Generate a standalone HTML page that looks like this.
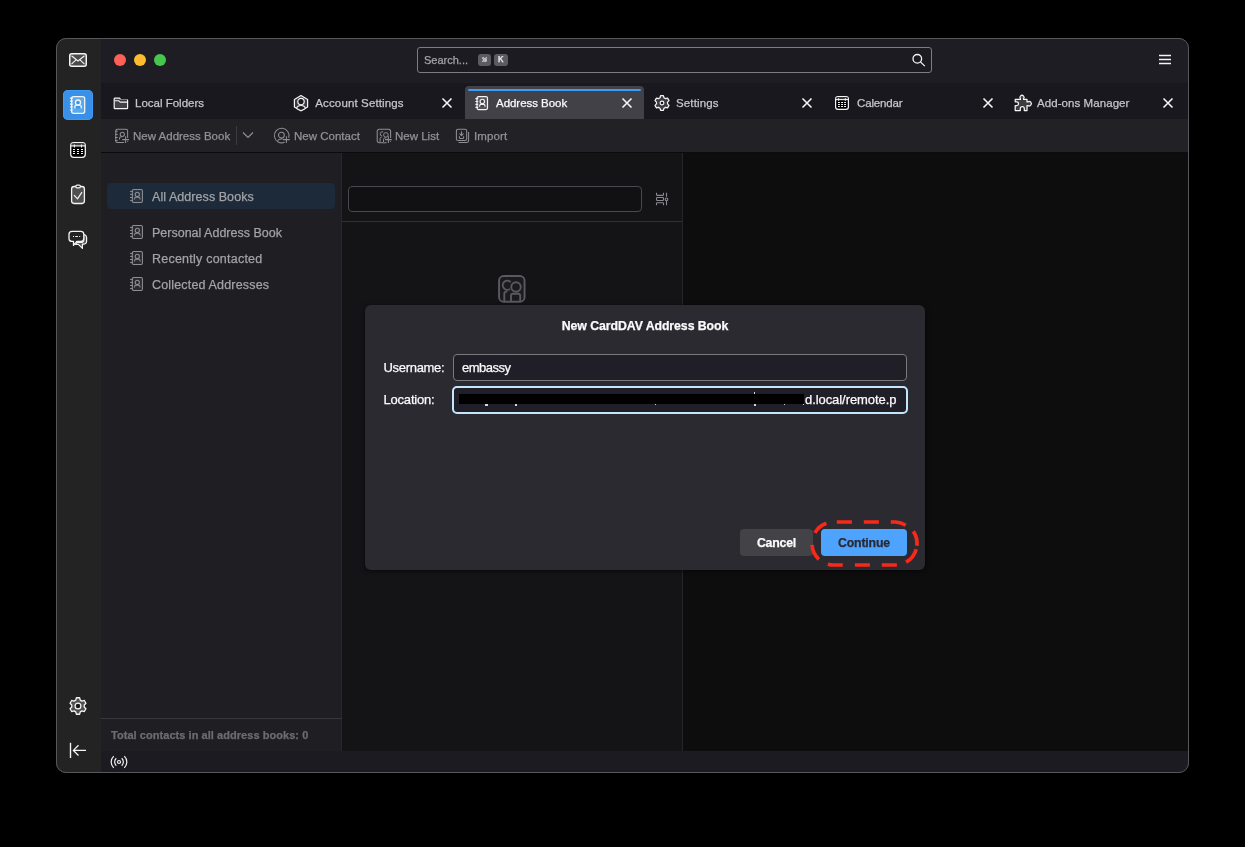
<!DOCTYPE html>
<html><head><meta charset="utf-8"><style>
html,body{margin:0;padding:0;background:#000;width:1245px;height:847px;overflow:hidden}
.a{position:absolute}
.t{position:absolute;white-space:nowrap;line-height:30px;font-family:"Liberation Sans", sans-serif;-webkit-text-stroke:0.25px currentColor}
#win{position:absolute;left:56px;top:38px;width:1133px;height:735px;border-radius:10px;overflow:hidden;background:#1c1b22}
#win > *{}
#frame{position:absolute;left:56px;top:38px;width:1131px;height:733px;border-radius:10px;border:1px solid #57565b;pointer-events:none}
</style></head><body>
<div id="win"><div class="a" style="left:-56px;top:-38px;width:1245px;height:847px;will-change:transform">
<div class="a" style="left:56px;top:38px;width:45px;height:735px;background:#232323;border-radius:0;"></div><div class="a" style="left:101px;top:38px;width:1088px;height:45px;background:#1e1d23;border-radius:0;"></div><div class="a" style="left:101px;top:83px;width:1088px;height:36px;background:#19181e;border-radius:0;"></div><div class="a" style="left:101px;top:119px;width:1088px;height:33px;background:#222126;border-radius:0;"></div><div class="a" style="left:101px;top:152px;width:1088px;height:1px;background:#0b0b0c;border-radius:0;"></div><div class="a" style="left:101px;top:153px;width:241px;height:598px;background:#1f1f23;border-radius:0;"></div><div class="a" style="left:342px;top:153px;width:340px;height:598px;background:#141417;border-radius:0;"></div><div class="a" style="left:341px;top:153px;width:1px;height:598px;background:#28282b;border-radius:0;"></div><div class="a" style="left:682px;top:153px;width:1px;height:598px;background:#262629;border-radius:0;"></div><div class="a" style="left:683px;top:153px;width:506px;height:598px;background:#0d0d0e;border-radius:0;"></div><div class="a" style="left:101px;top:751px;width:1088px;height:22px;background:#1c1b21;border-radius:0;"></div><svg class="a" style="left:68px;top:52px" width="20" height="16" viewBox="0 0 20 16" fill="none"><rect x="1.75" y="1.75" width="16.5" height="12.5" rx="2" fill="#4a4a4a" stroke="#f4f4f5" stroke-width="1.5"/><path d="M3.5 3.8 L10 9 L16.5 3.8 M3.5 12.2 L8.2 7.6 M16.5 12.2 L11.8 7.6" stroke="#f4f4f5" stroke-width="1.1"/></svg><div class="a" style="left:63px;top:90px;width:30px;height:30px;background:#3990e6;border-radius:5px;box-shadow:inset 0 0 0 1px #3d9bf5"></div><svg class="a" style="left:60px;top:86px" width="36" height="38" viewBox="0 0 36 38" fill="none"><rect x="11.6" y="10.7" width="13.1" height="16.6" rx="2" fill="#5aa8ee" stroke="#f4f4f5" stroke-width="1.3"/><path d="M9.9 12.2h2.9M9.9 15.1h2.9M9.9 18.1h2.9M9.9 21h2.9M9.9 24h2.9" stroke="#f4f4f5" stroke-width="1.2"/><path d="M14.9 22.6v-1.6c0-1.1.8-1.9 1.9-1.9h2.5c1.1 0 1.9.8 1.9 1.9v1.6" fill="#3d95e8" stroke="#f4f4f5" stroke-width="1.3"/><circle cx="18" cy="16.5" r="2.5" fill="#3d95e8" stroke="#f4f4f5" stroke-width="1.3"/></svg><svg class="a" style="left:64px;top:136px" width="28" height="28" viewBox="0 0 28 28" fill="none"><rect x="6.7" y="6.7" width="14.6" height="14.6" rx="3" fill="#000" stroke="#f4f4f5" stroke-width="1.3"/><rect x="7.5" y="7.4" width="13" height="2.2" fill="#444"/><path d="M7 9.9h14" stroke="#f4f4f5" stroke-width="1.2"/><path d="M10.4 8.4v3M17.5 8.4v3" stroke="#f4f4f5" stroke-width="1.1"/><path d="M9 13.5h2M13 13.5h2M17 13.5h2M9 15.5h2M13 15.5h2M17 15.5h2M9 17.5h2M13 17.5h2M17 17.5h2" stroke="#f4f4f5" stroke-width="1.2"/></svg><svg class="a" style="left:64px;top:180px" width="28" height="28" viewBox="0 0 28 28" fill="none"><rect x="7.6" y="6.5" width="12.8" height="17" rx="2.4" fill="#505050" stroke="#f4f4f5" stroke-width="1.3"/><rect x="11.8" y="5.2" width="4.6" height="2.6" rx="1.3" fill="#232323" stroke="#f4f4f5" stroke-width="1.2"/><path d="M10 15.2l3.5 3.6 4.5-6.7" stroke="#f4f4f5" stroke-width="1.2"/></svg><svg class="a" style="left:64px;top:226px" width="28" height="28" viewBox="0 0 28 28" fill="none"><path d="M19.4 8.6A3 3 0 0 1 22.6 11.6V15.2A3 3 0 0 1 19.6 18.2H18.4L18.4 22.4 14.4 18.4H11.6L12.6 16.4H16.8A3 3 0 0 0 19.8 13.4Z" fill="#555" stroke="#f4f4f5" stroke-width="1.2" stroke-linejoin="round"/><path d="M8 5.3H16.8A3 3 0 0 1 19.8 8.3V12.4A3 3 0 0 1 16.8 15.4H12.8L9.5 19.4V15.4H8A3 3 0 0 1 5 12.4V8.3A3 3 0 0 1 8 5.3Z" fill="#232323" stroke="#f4f4f5" stroke-width="1.3" stroke-linejoin="round"/><path d="M9 10.5h1M11.3 10.5h2.6M15.2 10.5h1" stroke="#f4f4f5" stroke-width="1.2"/></svg><svg class="a" style="left:64px;top:692px" width="28" height="28" viewBox="0 0 28 28" fill="none"><path d="M11.74 8.12 L12.40 5.75 L15.60 5.75 L16.26 8.12 L17.96 9.10 L20.34 8.49 L21.94 11.27 L20.22 13.01 L20.22 14.99 L21.94 16.73 L20.34 19.51 L17.96 18.90 L16.26 19.88 L15.60 22.25 L12.40 22.25 L11.74 19.88 L10.04 18.90 L7.66 19.51 L6.06 16.73 L7.78 14.99 L7.78 13.01 L6.06 11.27 L7.66 8.49 L10.04 9.10Z" fill="#505050" stroke="#f4f4f5" stroke-width="1.3" stroke-linejoin="round"/><circle cx="14" cy="14" r="2.9" fill="#1b1b1b" stroke="#f4f4f5" stroke-width="1.25"/></svg><svg class="a" style="left:64px;top:736px" width="28" height="28" viewBox="0 0 28 28" fill="none"><path d="M6.5 6.8v15.2" stroke="#f4f4f5" stroke-width="1.4"/><path d="M22 14.4H9.6M14.5 9.3 9.4 14.4l5.1 5.1" stroke="#f4f4f5" stroke-width="1.3"/></svg><div class="a" style="left:114px;top:54px;width:12px;height:12px;border-radius:50%;background:#fe5f57"></div><div class="a" style="left:134px;top:54px;width:12px;height:12px;border-radius:50%;background:#febb2e"></div><div class="a" style="left:154px;top:54px;width:12px;height:12px;border-radius:50%;background:#47c64f"></div><div class="a" style="left:417px;top:47px;width:513px;height:24px;border:1px solid #7d7c83;border-radius:3px;background:#1c1b21"></div><div class="t" style="left:424px;top:45px;font-size:11px;font-weight:400;color:#a4a4a8;letter-spacing:0px;">Search...</div><div class="a" style="left:478px;top:54px;width:13px;height:12px;background:#5c5b63;border-radius:3px;"></div><div class="a" style="left:494px;top:54px;width:14px;height:12px;background:#5c5b63;border-radius:3px;"></div><svg class="a" style="left:481.6px;top:56.6px" width="5.8" height="5.8" viewBox="0 0 7 7" fill="none"><path d="M2.3 2.3h2.4v2.4H2.3z" stroke="#e4e4e6" stroke-width="1.1"/><circle cx="1.5" cy="1.5" r="1" stroke="#e4e4e6" stroke-width="1"/><circle cx="5.5" cy="1.5" r="1" stroke="#e4e4e6" stroke-width="1"/><circle cx="1.5" cy="5.5" r="1" stroke="#e4e4e6" stroke-width="1"/><circle cx="5.5" cy="5.5" r="1" stroke="#e4e4e6" stroke-width="1"/></svg><div class="t" style="left:498.4px;top:44px;font-size:8.6px;font-weight:700;color:#e8e8ea;letter-spacing:0px;transform:scaleX(0.9);transform-origin:left">K</div><svg class="a" style="left:911px;top:52px" width="16" height="16" viewBox="0 0 16 16" fill="none"><circle cx="6.3" cy="6.8" r="4.3" stroke="#f4f4f5" stroke-width="1.3"/><path d="M9.4 9.9l4.4 4.2" stroke="#f4f4f5" stroke-width="1.3"/></svg><svg class="a" style="left:1158px;top:53px" width="14" height="13" viewBox="0 0 14 13" fill="none"><path d="M1 2.5h12M1 6.5h12M1 10.5h12" stroke="#f4f4f5" stroke-width="1.5"/></svg><div class="a" style="left:465px;top:86px;width:179px;height:33px;background:#424148;border-radius:4px 4px 0 0;"></div><div class="a" style="left:468px;top:89px;width:173px;height:2px;background:#3a9ef7;border-radius:1px;"></div><div class="t" style="left:135px;top:88px;font-size:11.5px;font-weight:400;color:#c6c6ca;letter-spacing:0px;">Local Folders</div><div class="t" style="left:315.3px;top:88px;font-size:11.5px;font-weight:400;color:#c6c6ca;letter-spacing:0.13px;">Account Settings</div><svg class="a" style="left:441px;top:97px" width="12" height="12" viewBox="0 0 12 12" fill="none"><path d="M1.5 1.5l9 9M10.5 1.5l-9 9" stroke="#f4f4f5" stroke-width="1.6"/></svg><div class="t" style="left:496px;top:88px;font-size:11.5px;font-weight:400;color:#fbfbfe;letter-spacing:-0.04px;">Address Book</div><svg class="a" style="left:621px;top:97px" width="12" height="12" viewBox="0 0 12 12" fill="none"><path d="M1.5 1.5l9 9M10.5 1.5l-9 9" stroke="#f4f4f5" stroke-width="1.6"/></svg><div class="t" style="left:676px;top:88px;font-size:11.5px;font-weight:400;color:#c6c6ca;letter-spacing:0.14px;">Settings</div><svg class="a" style="left:801px;top:97px" width="12" height="12" viewBox="0 0 12 12" fill="none"><path d="M1.5 1.5l9 9M10.5 1.5l-9 9" stroke="#f4f4f5" stroke-width="1.6"/></svg><div class="t" style="left:857px;top:88px;font-size:11.5px;font-weight:400;color:#c6c6ca;letter-spacing:-0.14px;">Calendar</div><svg class="a" style="left:982px;top:97px" width="12" height="12" viewBox="0 0 12 12" fill="none"><path d="M1.5 1.5l9 9M10.5 1.5l-9 9" stroke="#f4f4f5" stroke-width="1.6"/></svg><div class="t" style="left:1037px;top:88px;font-size:11.5px;font-weight:400;color:#c6c6ca;letter-spacing:0.07px;">Add-ons Manager</div><svg class="a" style="left:1162px;top:97px" width="12" height="12" viewBox="0 0 12 12" fill="none"><path d="M1.5 1.5l9 9M10.5 1.5l-9 9" stroke="#f4f4f5" stroke-width="1.6"/></svg><svg class="a" style="left:109px;top:91px" width="24" height="24" viewBox="0 0 24 24" fill="none"><path d="M5.2 17V7.9c0-.4.3-.7.7-.7h4.6l1.5 1.6h5.9c.4 0 .7.3.7.7V17c0 .4-.3.7-.7.7H5.9c-.4 0-.7-.3-.7-.7z" fill="#424147" stroke="#f4f4f5" stroke-width="1.2" stroke-linejoin="round"/><path d="M5.6 9.8h4.2l1.5 1.3h7" stroke="#f4f4f5" stroke-width="1.1"/><path d="M10.8 9.2h7.2" stroke="#1b1a20" stroke-width="1.2"/></svg><svg class="a" style="left:289px;top:91px" width="24" height="24" viewBox="0 0 24 24" fill="none"><path d="M12 4.6l6.6 3.8v7.6L12 19.6 5.4 16V8.4z" fill="#3c3b41" stroke="#f4f4f5" stroke-width="1.2" stroke-linejoin="round"/><path d="M7.6 17.5c.4-1.9 2.2-3 4.4-3s4 1.1 4.4 3l-4.4 2.2z" fill="#1b1a20" stroke="#f4f4f5" stroke-width="1.1" stroke-linejoin="round"/><circle cx="12" cy="10.6" r="3.2" fill="#1b1a20" stroke="#f4f4f5" stroke-width="1.2"/></svg><svg class="a" style="left:470px;top:91px" width="24" height="24" viewBox="0 0 24 24" fill="none"><rect x="7" y="5.6" width="10.5" height="13" rx="1.5" fill="#56555c" stroke="#f4f4f5" stroke-width="1.2"/><path d="M5.4 7.6h2.8M5.4 10.5h2.8M5.4 13.4h2.8M5.4 16.4h2.8" stroke="#f4f4f5" stroke-width="1.1"/><circle cx="12.3" cy="10.4" r="2.2" fill="#424148" stroke="#f4f4f5" stroke-width="1.15"/><path d="M9.6 15.8v-.9c0-1 .8-1.6 1.7-1.6h2c1 0 1.7.7 1.7 1.6v.9" fill="#424148" stroke="#f4f4f5" stroke-width="1.15"/></svg><svg class="a" style="left:650px;top:91px" width="24" height="24" viewBox="0 0 24 24" fill="none"><path d="M9.99 6.77 L10.59 4.74 L13.41 4.74 L14.01 6.77 L15.52 7.65 L17.58 7.15 L19.00 9.59 L17.53 11.12 L17.53 12.88 L19.00 14.41 L17.58 16.85 L15.52 16.35 L14.01 17.23 L13.41 19.26 L10.59 19.26 L9.99 17.23 L8.48 16.35 L6.42 16.85 L5.00 14.41 L6.47 12.88 L6.47 11.12 L5.00 9.59 L6.42 7.15 L8.48 7.65Z" fill="#3c3b41" stroke="#f4f4f5" stroke-width="1.25" stroke-linejoin="round"/><circle cx="12" cy="12" r="1.9" fill="#1b1a20" stroke="#f4f4f5" stroke-width="1.15"/></svg><svg class="a" style="left:830px;top:91px" width="24" height="24" viewBox="0 0 24 24" fill="none"><rect x="5.6" y="5.6" width="12.8" height="12.8" rx="2.4" fill="#000" stroke="#f4f4f5" stroke-width="1.2"/><rect x="6.4" y="6.3" width="11.2" height="2" fill="#38373c"/><path d="M6 8.6h12" stroke="#f4f4f5" stroke-width="1.1"/><path d="M8.6 7.2v2.6M15.4 7.2v2.6" stroke="#f4f4f5" stroke-width="1"/><path d="M8 11.5h1.9M11.1 11.5h1.9M14.1 11.5h1.9M8 13.5h1.9M11.1 13.5h1.9M14.1 13.5h1.9M8 15.5h1.9M11.1 15.5h1.9M14.1 15.5h1.9" stroke="#f4f4f5" stroke-width="1.1"/></svg><svg class="a" style="left:1010px;top:91px" width="26" height="24" viewBox="0 0 26 24" fill="none"><path d="M5.2 8.4H10.4V7.7A2.05 2.05 0 1 1 13.6 7.7V8.4H17V10.9H17.9A2.2 2.2 0 1 1 17.9 14.5H17V19.6H14.3V17.6A2 2 0 0 0 10.3 17.6V19.6H5.2V14.5H7.1A1.9 1.9 0 0 0 7.1 10.8H5.2Z" fill="#3c3b40" stroke="#f4f4f5" stroke-width="1.25" stroke-linejoin="round"/></svg><div class="t" style="left:133px;top:121px;font-size:11.5px;font-weight:400;color:#929297;letter-spacing:0px;">New Address Book</div><div class="a" style="left:236px;top:126px;width:1px;height:19px;background:#3b3a3f;border-radius:0;"></div><svg class="a" style="left:242px;top:130px" width="12" height="10" viewBox="0 0 12 10" fill="none"><path d="M1 2.5l5 5 5-5" stroke="#8e8e93" stroke-width="1.2"/></svg><div class="t" style="left:294px;top:121px;font-size:11.5px;font-weight:400;color:#929297;letter-spacing:0px;">New Contact</div><div class="t" style="left:395px;top:121px;font-size:11.5px;font-weight:400;color:#929297;letter-spacing:0px;">New List</div><div class="t" style="left:474px;top:121px;font-size:11.5px;font-weight:400;color:#929297;letter-spacing:0.12px;">Import</div><svg class="a" style="left:110px;top:124px" width="24" height="24" viewBox="0 0 24 24" fill="none"><path d="M7.2 5.3h9a1.4 1.4 0 0 1 1.4 1.4V14M14 18.5H7.2a1.4 1.4 0 0 1-1.4-1.4V6.7a1.4 1.4 0 0 1 1.4-1.4" stroke="#8e8e93" stroke-width="1.05"/><path d="M5 7.2h2.8M5 10.3h2.8M5 13.5h2.8M5 16.6h2.8" stroke="#8e8e93" stroke-width="1"/><circle cx="12.3" cy="10.3" r="2.1" stroke="#8e8e93" stroke-width="1.05"/><path d="M9.5 15.6v-1.2c0-1 .8-1.6 1.8-1.6h.9" stroke="#8e8e93" stroke-width="1.05"/><path d="M15.6 12.2v6.8M12.2 15.6h6.8" stroke="#8e8e93" stroke-width="1.05"/><circle cx="17.6" cy="17.6" r=".5" fill="#8e8e93"/></svg><svg class="a" style="left:270px;top:124px" width="24" height="24" viewBox="0 0 24 24" fill="none"><path d="M18.6 13.8A7.3 7.3 0 1 0 14.6 18.2" stroke="#8e8e93" stroke-width="1.05"/><circle cx="11.4" cy="11.2" r="2.9" stroke="#8e8e93" stroke-width="1.05"/><path d="M7.6 16.6c.7-1 2-1.7 3.6-1.7h1.4" stroke="#8e8e93" stroke-width="1.05"/><path d="M16.4 12.2v6.8M13 15.6h6.8" stroke="#8e8e93" stroke-width="1.05"/></svg><svg class="a" style="left:372px;top:124px" width="24" height="24" viewBox="0 0 24 24" fill="none"><path d="M18.6 14V7.3a2.1 2.1 0 0 0-2.1-2.1H7.3a2.1 2.1 0 0 0-2.1 2.1v9.4a2.1 2.1 0 0 0 2.1 2.1h7.4" stroke="#8e8e93" stroke-width="1.05"/><path d="M11.2 8a2.1 2.1 0 1 0 -1 4" stroke="#8e8e93" stroke-width="1"/><circle cx="13.9" cy="10.9" r="2.3" stroke="#8e8e93" stroke-width="1"/><path d="M8.1 18v-3.4c0-.9.6-1.5 1.5-1.5M11.5 18v-2.6c0-.9.6-1.5 1.5-1.5h1.2" stroke="#8e8e93" stroke-width="1"/><path d="M16.4 12.2v6.8M13 15.6h6.8" stroke="#8e8e93" stroke-width="1.05"/><circle cx="18.5" cy="17.6" r=".5" fill="#8e8e93"/></svg><svg class="a" style="left:451px;top:124px" width="24" height="24" viewBox="0 0 24 24" fill="none"><rect x="5.4" y="5.2" width="10.3" height="11.3" rx="1.6" stroke="#8e8e93" stroke-width="1.05"/><path d="M7.6 18.4h8.4a1.6 1.6 0 0 0 1.6-1.6V8" stroke="#8e8e93" stroke-width="1.05"/><path d="M10.5 7.2v4.5M8.4 9.5l2.1 2.2 2.1-2.2M8.4 12.2v1.6c0 .4.3.6.6.6h3c.4 0 .6-.2.6-.6v-1.6" stroke="#8e8e93" stroke-width="1.05"/></svg><div class="a" style="left:107px;top:183px;width:228px;height:26px;background:#1c2a3a;border-radius:4px;"></div><svg class="a" style="left:124px;top:184px" width="24" height="24" viewBox="0 0 24 24" fill="none"><rect x="8.3" y="5.5" width="10.1" height="13" rx="1.3" fill="rgba(255,255,255,0.05)" stroke="#8f8f93" stroke-width="1.05"/><path d="M6 7.4h2.8M6 10.4h2.8M6 13.5h2.8M6 16.6h2.8" stroke="#8f8f93" stroke-width="1"/><circle cx="13.3" cy="10.4" r="2.1" stroke="#8f8f93" stroke-width="1.05"/><path d="M10.5 15.6v-.6c0-1 .8-1.7 1.7-1.7h2.2c1 0 1.7.7 1.7 1.7v.6" stroke="#8f8f93" stroke-width="1.05"/></svg><div class="t" style="left:152px;top:182px;font-size:12.5px;font-weight:400;color:#a3a3a6;letter-spacing:0.06px;">All Address Books</div><svg class="a" style="left:124px;top:220px" width="24" height="24" viewBox="0 0 24 24" fill="none"><rect x="8.3" y="5.5" width="10.1" height="13" rx="1.3" fill="rgba(255,255,255,0.05)" stroke="#8f8f93" stroke-width="1.05"/><path d="M6 7.4h2.8M6 10.4h2.8M6 13.5h2.8M6 16.6h2.8" stroke="#8f8f93" stroke-width="1"/><circle cx="13.3" cy="10.4" r="2.1" stroke="#8f8f93" stroke-width="1.05"/><path d="M10.5 15.6v-.6c0-1 .8-1.7 1.7-1.7h2.2c1 0 1.7.7 1.7 1.7v.6" stroke="#8f8f93" stroke-width="1.05"/></svg><div class="t" style="left:152px;top:218px;font-size:12.5px;font-weight:400;color:#a3a3a6;letter-spacing:0px;">Personal Address Book</div><svg class="a" style="left:124px;top:246px" width="24" height="24" viewBox="0 0 24 24" fill="none"><rect x="8.3" y="5.5" width="10.1" height="13" rx="1.3" fill="rgba(255,255,255,0.05)" stroke="#8f8f93" stroke-width="1.05"/><path d="M6 7.4h2.8M6 10.4h2.8M6 13.5h2.8M6 16.6h2.8" stroke="#8f8f93" stroke-width="1"/><circle cx="13.3" cy="10.4" r="2.1" stroke="#8f8f93" stroke-width="1.05"/><path d="M10.5 15.6v-.6c0-1 .8-1.7 1.7-1.7h2.2c1 0 1.7.7 1.7 1.7v.6" stroke="#8f8f93" stroke-width="1.05"/></svg><div class="t" style="left:152px;top:244px;font-size:12.5px;font-weight:400;color:#a3a3a6;letter-spacing:0.23px;">Recently contacted</div><svg class="a" style="left:124px;top:272px" width="24" height="24" viewBox="0 0 24 24" fill="none"><rect x="8.3" y="5.5" width="10.1" height="13" rx="1.3" fill="rgba(255,255,255,0.05)" stroke="#8f8f93" stroke-width="1.05"/><path d="M6 7.4h2.8M6 10.4h2.8M6 13.5h2.8M6 16.6h2.8" stroke="#8f8f93" stroke-width="1"/><circle cx="13.3" cy="10.4" r="2.1" stroke="#8f8f93" stroke-width="1.05"/><path d="M10.5 15.6v-.6c0-1 .8-1.7 1.7-1.7h2.2c1 0 1.7.7 1.7 1.7v.6" stroke="#8f8f93" stroke-width="1.05"/></svg><div class="t" style="left:152px;top:270px;font-size:12.5px;font-weight:400;color:#a3a3a6;letter-spacing:0.17px;">Collected Addresses</div><div class="a" style="left:101px;top:718px;width:241px;height:1px;background:#38373c;border-radius:0;"></div><div class="t" style="left:111px;top:720px;font-size:11px;font-weight:700;color:#6d6c71;letter-spacing:0.05px;">Total contacts in all address books: 0</div><div class="a" style="left:348px;top:186px;width:292px;height:24px;border:1px solid #49484d;border-radius:4px;background:#111113"></div><div class="a" style="left:342px;top:221px;width:340px;height:1px;background:#323135;border-radius:0;"></div><svg class="a" style="left:650px;top:187px" width="24" height="24" viewBox="0 0 24 24" fill="none"><path d="M6.5 5.8v2c0 .4.3.6.6.6h5.8c.4 0 .6-.2.6-.6v-2M6.5 18.3v-2c0-.4.3-.6.6-.6h5.8c.4 0 .6.2.6.6v2" stroke="#8a8a8e" stroke-width="1.1"/><rect x="6.55" y="10.55" width="6.9" height="2.9" rx=".7" stroke="#8a8a8e" stroke-width="1.1"/><path d="M16.5 5.8v4M16.5 13.8v4.5" stroke="#8a8a8e" stroke-width="1.1"/><circle cx="16.5" cy="12.3" r="1.35" stroke="#8a8a8e" stroke-width="1.05"/></svg><svg class="a" style="left:486px;top:262px" width="50" height="50" viewBox="0 0 50 50" fill="none"><rect x="13.05" y="13.95" width="25.5" height="25.8" rx="4.6" fill="#1b1b1d" stroke="#5a5a5e" stroke-width="1.9"/><path d="M24.6 20.2A4.5 4.5 0 1 0 23.9 26.9" stroke="#5a5a5e" stroke-width="1.9"/><circle cx="30" cy="25" r="4.75" stroke="#5a5a5e" stroke-width="1.9"/><path d="M18.3 39.5V31.6A2 2 0 0 1 20.3 29.6H21.3M25 39.5V33.7A2 2 0 0 1 27 31.7H32.2A2 2 0 0 1 34.2 33.7V39.5" stroke="#5a5a5e" stroke-width="1.9"/></svg><svg class="a" style="left:100px;top:750px" width="30" height="24" viewBox="0 0 30 24" fill="none"><circle cx="19" cy="12" r="1.5" stroke="#f4f4f5" stroke-width="1.2"/><path d="M16.3 8.3a5 5 0 0 0 0 7.4M21.7 8.3a5 5 0 0 1 0 7.4M13.7 6.1a8.2 8.2 0 0 0 0 11.8M24.3 6.1a8.2 8.2 0 0 1 0 11.8" stroke="#f4f4f5" stroke-width="1.2"/></svg><div class="a" style="left:365px;top:305px;width:560px;height:265px;border-radius:6px;background:#2b2a30;box-shadow:0 1px 5px rgba(0,0,0,.6)"></div><div class="t" style="left:365px;top:311px;width:560px;text-align:center;font-size:12.3px;font-weight:700;color:#fbfbfe;letter-spacing:-0.065px">New CardDAV Address Book</div><div class="t" style="left:383.5px;top:352.5px;font-size:13px;font-weight:400;color:#fbfbfe;letter-spacing:-0.31px;">Username:</div><div class="t" style="left:383.5px;top:385px;font-size:13px;font-weight:400;color:#fbfbfe;letter-spacing:-0.2px;">Location:</div><div class="a" style="left:453px;top:354px;width:452px;height:25px;border:1px solid #7a797e;border-radius:4px;background:#201f28"></div><div class="t" style="left:462px;top:352.5px;font-size:13px;font-weight:400;color:#fbfbfe;letter-spacing:-0.5px;">embassy</div><div class="a" style="left:452px;top:386px;width:452px;height:24px;border:2px solid #c3e6ff;border-radius:5px;background:#201f28"></div><div class="a" style="left:459px;top:394px;width:345px;height:10px;background:#000;border-radius:0;"></div><div class="a" style="left:485px;top:404px;width:3px;height:1.5px;background:#d8d8dc;border-radius:0;"></div><div class="a" style="left:515px;top:404px;width:1.5px;height:1.5px;background:#d8d8dc;border-radius:0;"></div><div class="a" style="left:655px;top:404px;width:1px;height:1px;background:#d8d8dc;border-radius:0;"></div><div class="a" style="left:754px;top:391.5px;width:1px;height:2.5px;background:#d8d8dc;border-radius:0;"></div><div class="a" style="left:754px;top:404px;width:1.5px;height:2px;background:#d8d8dc;border-radius:0;"></div><div class="a" style="left:784px;top:404px;width:1px;height:1px;background:#d8d8dc;border-radius:0;"></div><div class="a" style="left:803px;top:404px;width:1px;height:1px;background:#d8d8dc;border-radius:0;"></div><div class="t" style="left:805px;top:385px;font-size:13px;font-weight:400;color:#fbfbfe;letter-spacing:-0.07px;">d.local/remote.p</div><div class="a" style="left:740px;top:529px;width:73px;height:27px;background:#434247;border-radius:4px;"></div><div class="t" style="left:740px;top:528px;width:73px;text-align:center;font-size:12.3px;font-weight:700;color:#fbfbfe;letter-spacing:-0.2px">Cancel</div><div class="a" style="left:821px;top:529px;width:86px;height:27px;background:#4da3fd;border-radius:4px;"></div><div class="t" style="left:821px;top:528px;width:86px;text-align:center;font-size:12.3px;font-weight:700;color:#2a2a33;letter-spacing:-0.19px">Continue</div><svg class="a" style="left:0;top:0" width="1245" height="847" viewBox="0 0 1245 847" fill="none"><path d="M836.8 522H851.9M863.8 522H878.9M890.8 522H895.5A21.5 21.5 0 0 1 905.7 525.3M913.3 531.4A21.5 21.5 0 0 1 916.9 545.8M916.2 549.2A21.5 21.5 0 0 1 906.1 562.2M896.9 565H881.8M869.9 565H854.9M842.8 565H833.5A21.5 21.5 0 0 1 827.8 564.2M818.9 559.3A21.5 21.5 0 0 1 812.05 544.9M814.9 532.8A21.5 21.5 0 0 1 826.4 523.2" stroke="#f7291a" stroke-width="3.7"/></svg>
</div></div>
<div id="frame"></div>
</body></html>
